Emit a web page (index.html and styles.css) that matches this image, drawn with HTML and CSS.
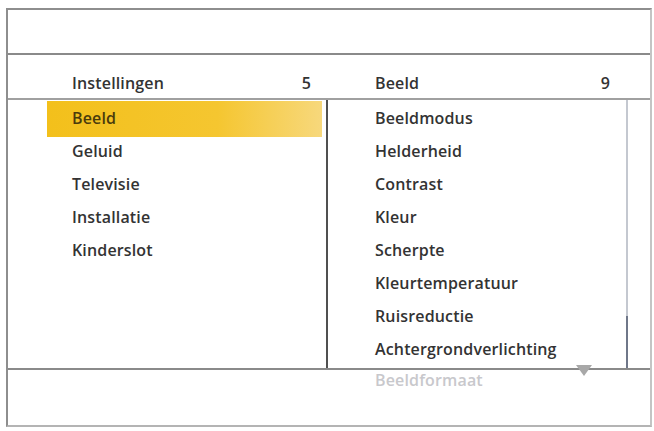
FILE: index.html
```html
<!DOCTYPE html>
<html>
<head>
<meta charset="utf-8">
<link rel="stylesheet" href="styles.css">
</head>
<body>
<div class="frame">
  <div class="topband"></div>
  <div class="header">
    <div class="hcol left"><span>Instellingen</span><span>5</span></div>
    <div class="hcol right"><span>Beeld</span><span>9</span></div>
  </div>
  <div class="main">
    <div class="col leftcol">
      <div class="item sel">Beeld</div>
      <div class="item">Geluid</div>
      <div class="item">Televisie</div>
      <div class="item">Installatie</div>
      <div class="item">Kinderslot</div>
    </div>
    <div class="col rightcol">
      <div class="list">
        <div class="item">Beeldmodus</div>
        <div class="item">Helderheid</div>
        <div class="item">Contrast</div>
        <div class="item">Kleur</div>
        <div class="item">Scherpte</div>
        <div class="item">Kleurtemperatuur</div>
        <div class="item">Ruisreductie</div>
        <div class="item">Achtergrondverlichting</div>
      </div>
      <div class="scrollbar"><div class="thumb"></div></div>
    </div>
  </div>
  <div class="footer">
    <div class="faded">Beeldformaat</div>
    <div class="arrow"></div>
  </div>
</div>
</body>
</html>
```
FILE: styles.css
```css
html, body { margin: 0; padding: 0; background: #fff; }
body { font-family: "Open Sans", "Liberation Sans", sans-serif; font-weight: 600; font-size: 16px; letter-spacing: 0.15px; color: #333; }
.frame { margin: 8px 0 0 6px; width: 642px; height: 415px; border: 2px solid #8e8e8e; border-right-color: #c4c4c4; border-bottom-color: #b4b4b4; display: flex; flex-direction: column; position: relative; }
.topband { height: 43px; border-bottom: 2px solid #8a8a8a; flex: none; }
.header { height: 43px; border-bottom: 2px solid #a0a0a0; display: flex; flex: none; }
.hcol { display: flex; justify-content: space-between; align-items: center; padding-top: 13px; box-sizing: border-box; }
.hcol.left { width: 320px; padding-left: 64px; padding-right: 17px; }
.hcol.right { flex: 1; padding-left: 47px; padding-right: 40px; }
.main { height: 268px; display: flex; flex: none; border-bottom: 2px solid #8a8a8a; }
.col { padding-top: 2px; box-sizing: border-box; }
.leftcol { width: 320px; border-right: 2px solid #505050; }
.rightcol { flex: 1; display: flex; }
.list { flex: 1; overflow: hidden; }
.item { height: 33px; line-height: 33px; white-space: nowrap; }
.leftcol .item { margin-left: 39px; margin-right: 4px; padding-left: 25px; }
.rightcol .item { padding-left: 47px; }
.item.sel { background: linear-gradient(to right, #f3c01b 0%, #f5c630 62%, #f7d87c 100%); color: #4a3b0c; height: 36px; line-height: 35px; margin-top: -1px; margin-bottom: -2px; }
.scrollbar { width: 2px; margin-right: 22px; background: #c4c8d0; display: flex; flex-direction: column; justify-content: flex-end; margin-top: -2px; }
.thumb { height: 52px; background: #6f7789; }
.footer { flex: 1; position: relative; }
.faded { color: #c8c8cc; padding-left: 367px; line-height: 20px; }
.arrow { position: absolute; left: 568px; top: -5px; width: 0; height: 0; border-left: 8px solid transparent; border-right: 8px solid transparent; border-top: 11px solid #a8a8a8; }
```
